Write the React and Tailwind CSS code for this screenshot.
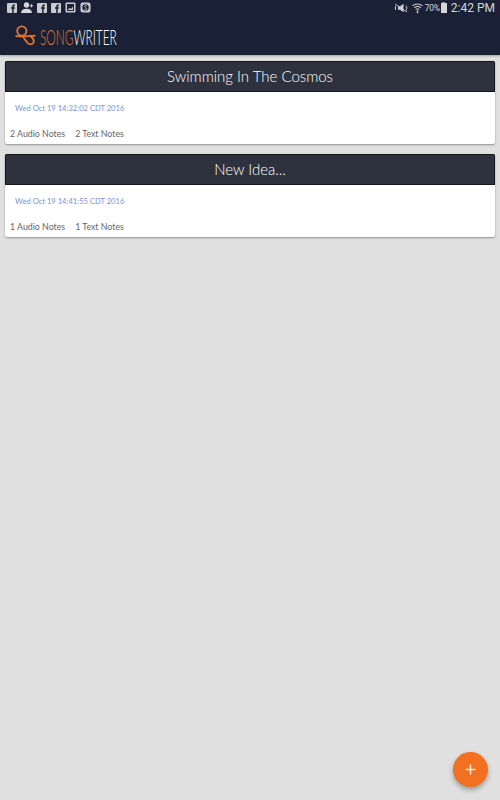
import { Plus } from 'lucide-react'

const FONT = "font-['Lato','Liberation_Sans',sans-serif]"

function FbIcon() {
  return (
    <div className="w-[10px] h-[10px] rounded-[1px] bg-[#c9cbd0] relative overflow-hidden">
      <svg viewBox="0 0 10 10" className="w-full h-full">
        <path d="M5.2 10V5.8H4V4.3h1.2V3.2C5.2 2 5.9 1.4 7 1.4h1v1.4h-.6c-.5 0-.7.2-.7.6v.9h1.3l-.2 1.500H6.700V10z" fill="#1a2035" />
      </svg>
    </div>
  )
}

function StatusLeft() {
  return (
    <div className="flex items-center gap-[4px]">
      <FbIcon />
      <svg viewBox="0 0 12 11" className="w-[12px] h-[11px]">
        <circle cx="5.500" cy="3" r="2.700" fill="#d4d6da" />
        <path d="M0 11c.2-2.800 2-4.300 5.500-4.300S10.800 8.200 11 11z" fill="#d4d6da" />
        <path d="M8.800 3.800h3.200M10.400 2.200v3.200" stroke="#d4d6da" strokeWidth="1" />
      </svg>
      <FbIcon />
      <FbIcon />
      <svg viewBox="0 0 11 11" className="w-[11px] h-[11px]">
        <rect x="0.500" y="0.500" width="10" height="10" rx="1" fill="#c9cbd0" />
        <rect x="2" y="2" width="7" height="7" fill="#1a2035" />
        <path d="M2.500 8l2-2 1.500 1 2-2.500V8z" fill="#c9cbd0" />
      </svg>
      <svg viewBox="0 0 11 11" className="w-[11px] h-[11px]">
        <rect x="0.500" y="0.500" width="10" height="10" rx="2" fill="#c9cbd0" />
        <circle cx="5.500" cy="5.500" r="3.200" fill="#1a2035" />
        <path d="M7 3.800C5.500 3 4 3.800 5 5.200s2.500 1 1.200 2.300c-.8.500-1.800.2-2.300-.2" stroke="#c9cbd0" strokeWidth="0.900" fill="none" />
      </svg>
    </div>
  )
}

function StatusRight() {
  return (
    <div className="flex items-center">
      <svg viewBox="0 0 15 10" className="w-[15px] h-[10px]">
        <path d="M4 3.200h2L9.500.8v8.400L6 6.800H4z" fill="#c9cbd0" />
        <path d="M1 1l12 8" stroke="#c9cbd0" strokeWidth="1" />
        <path d="M1.500 3v4M12 2.500c1 1.500 1 3.500 0 5" stroke="#c9cbd0" strokeWidth="1" fill="none" />
      </svg>
      <svg viewBox="0 0 12 12" className="w-[11px] h-[12px] ml-[3px]">
        <path d="M.5 3.800C3.500 1 8.500 1 11.500 3.800M2.300 5.800c2.200-1.900 5.200-1.900 7.400 0M4 7.700c1.200-1 2.800-1 4 0" stroke="#c9cbd0" strokeWidth="1.100" fill="none" />
        <path d="M5.200 8.500h1.600v3.200H5.200z" fill="#c9cbd0" />
      </svg>
      <span className="text-[8.500px] leading-[11px] pt-[1px] text-[#d4d6da] font-['Roboto',sans-serif] ml-[2px] w-[16px] tracking-[-0.3px]">70%</span>
      <div className="flex flex-col items-center">
        <div className="w-[3px] h-[1px] bg-[#8d909a]" />
        <div className="w-[6px] h-[10px] bg-[#d4d6da]" />
      </div>
      <span className="ml-[4px] text-[12px] leading-none pt-[1px] text-[#d4d6da] font-['Roboto',sans-serif]">2:42 PM</span>
    </div>
  )
}

function Logo() {
  return (
    <div className="flex items-center pl-[15px]">
      <svg viewBox="0 0 22 22" className="w-[22px] h-[22px]">
        <circle cx="6.800" cy="6" r="4.600" stroke="#e8752a" strokeWidth="1.800" fill="none" />
        <path d="M.5 11.200c6 .3 13 .3 20-.6" stroke="#e8752a" strokeWidth="1.800" fill="none" />
        <path d="M7.500 11c2.500 3 3.500 6.500 6.500 8 2.500 1 5-.5 4.800-3-.1-2-1.500-3.500-3.300-4.500" stroke="#e8752a" strokeWidth="1.800" fill="none" />
      </svg>
      <div className={`ml-[3px] text-[21px] leading-none font-light whitespace-nowrap origin-left scale-x-[0.565] ${FONT}`}>
        <span className="text-[#e8752a]">SONG</span>
        <span className="text-white">WRITER</span>
      </div>
    </div>
  )
}

function SongCard({ title, date, audio, text }) {
  return (
    <article className={`bg-white rounded-[2px] shadow-[0_1px_2px_rgba(0,0,0,0.35)] overflow-hidden ${FONT}`}>
      <div className="h-[31px] bg-[#2d323e] border border-[#14161c] flex items-center justify-center">
        <h2 className="text-[15px] font-light text-white leading-none">{title}</h2>
      </div>
      <p className="mt-[11px] pl-[10px] text-[7.600px] leading-[10px] text-[#7f8fd8]">{date}</p>
      <div className="mt-[15px] pb-[5px] pl-[5px] flex gap-[10px] text-[8.800px] leading-[11px] text-[#666]">
        <span>{audio} Audio Notes</span>
        <span>{text} Text Notes</span>
      </div>
    </article>
  )
}

export default function App() {
  return (
    <div className="w-[500px] h-[800px] bg-[#e0e0e0] flex flex-col relative overflow-hidden">
      <header className="h-[55px] bg-[#1a2035] shrink-0 shadow-[0_1px_2px_rgba(0,0,0,0.3)]">
        <div className="h-[15px] pl-[7px] pr-[5px] flex items-center justify-between">
          <StatusLeft />
          <StatusRight />
        </div>
        <div className="mt-[10px]">
          <Logo />
        </div>
      </header>
      <main className="flex flex-col gap-[10px] px-[5px] pt-[6px]">
        <SongCard title="Swimming In The Cosmos" date="Wed Oct 19 14:32:02 CDT 2016" audio={2} text={2} />
        <SongCard title="New Idea..." date="Wed Oct 19 14:41:55 CDT 2016" audio={1} text={1} />
      </main>
      <button
        type="button"
        className="absolute left-[453px] top-[752px] w-[35px] h-[35px] rounded-full bg-[#f37021] shadow-[0_3px_5px_rgba(0,0,0,0.3)] flex items-center justify-center"
      >
        <Plus size={15} strokeWidth={2.500} className="text-[#fbe3d3]" />
      </button>
    </div>
  )
}
